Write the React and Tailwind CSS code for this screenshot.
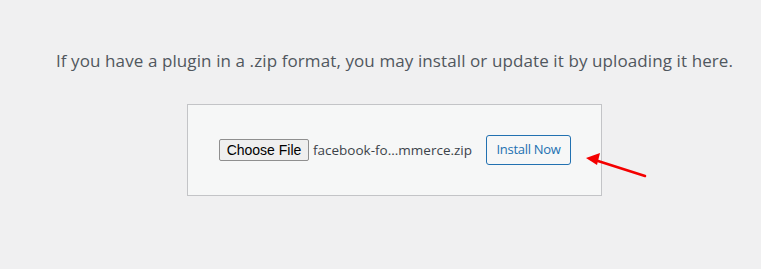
export default function App() {
  return (
    <div className="w-[761px] h-[269px] bg-[#f0f0f1] relative overflow-hidden pl-[28px]">
      <div className="flex flex-col items-center">
        <p className="mt-[50px] text-[17px] leading-[22px] text-[#50575e] font-['Open_Sans',sans-serif] tracking-[0.1px] whitespace-nowrap">
          If you have a plugin in a .zip format, you may install or update it by uploading it here.
        </p>
        <div className="mt-[32px] w-[415px] h-[92px] border border-[#c3c4c7] bg-[#f6f7f7] flex items-center justify-center">
          <div className="flex items-center pl-[1px]">
            <span className="h-[22px] w-[90px] flex items-center justify-center border border-[#8f8f8f] rounded-[2px] bg-[#efefef] text-[14px] text-black font-['Liberation_Sans',sans-serif]">
              Choose File
            </span>
            <span className="ml-[4px] w-[156px] whitespace-nowrap text-[13.5px] text-[#3c434a] font-['Open_Sans',sans-serif]">
              facebook-fo...mmerce.zip
            </span>
            <span className="ml-[17px] h-[30px] w-[85px] flex items-center justify-center border border-[#2271b1] rounded-[3px] bg-[#f6f7f7] text-[13px] text-[#2271b1] font-['Open_Sans',sans-serif] tracking-[-0.3px]">
              Install Now
            </span>
          </div>
        </div>
      </div>
      <svg className="absolute left-0 top-0" width="761" height="269" viewBox="0 0 761 269">
        <line x1="645" y1="176" x2="598" y2="161" stroke="#f40000" strokeWidth="2.5" strokeLinecap="round" />
        <polygon points="586,158 600,153 597,165" fill="#f40000" />
      </svg>
    </div>
  );
}
